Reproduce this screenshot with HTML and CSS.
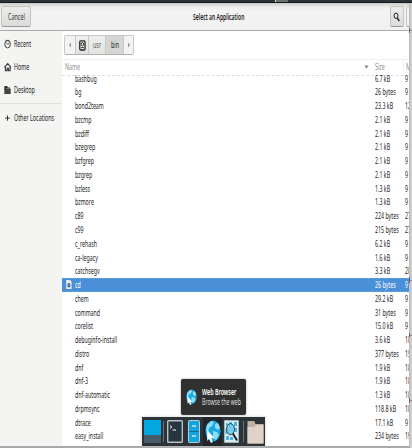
FILE: index.html
```
<!DOCTYPE html>
<html lang="en">
<head>
<meta charset="utf-8">
<title>Select an Application</title>
<link rel="stylesheet" href="styles.css">
</head>
<body>
<div class="desktop">
<div class="panel"><i></i><b></b><em></em></div>
<div class="window">
  <header class="titlebar">
    <button class="btn cancel"><span class="t">Cancel</span></button>
    <h1><span class="t">Select an Application</span></h1>
    <button class="btn search"><svg width="8" height="10" viewBox="0 0 8 10"><ellipse cx="3" cy="3.8" rx="2" ry="2.7" fill="none" stroke="#222" stroke-width="1"/><path d="M4.3 6 6.3 9" stroke="#222" stroke-width="1.4"/></svg></button>
    <button class="btn extra"></button>
  </header>
  <div class="content">
    <nav class="sidebar">
      <a><svg width="8" height="10" viewBox="0 0 8 10"><ellipse cx="3.6" cy="5.3" rx="2.8" ry="3.6" fill="none" stroke="#444" stroke-width="1"/><path d="M2.2 3.8 3.7 5.3 5.4 4.4M1.5 1.4h4" fill="none" stroke="#444" stroke-width=".9"/></svg><span class="t">Recent</span></a>
      <a><svg width="8" height="10" viewBox="0 0 8 10"><path d="M.3 5.4 3.7 1.5 7 5.4M1.4 4.8v4h1.7V6.2h1.3v2.6h1.7v-4" fill="none" stroke="#333" stroke-width="1.1"/></svg><span class="t">Home</span></a>
      <a><svg width="8" height="10" viewBox="0 0 8 10"><path d="M.3 1h2.9l.7 1.4h2.2v1H2v1.1H.3z" fill="#333"/><path d="M.3 3.6h6.4V9H.3z" fill="#444"/></svg><span class="t">Desktop</span></a>
      <a class="other"><svg width="8" height="10" viewBox="0 0 8 10"><path d="M3.5 2.5v5.2M1.2 5.1h4.6" stroke="#333" stroke-width="1"/></svg><span class="t">Other Locations</span></a>
    </nav>
    <main>
      <div class="pathbar">
        <span class="seg arrow"><svg width="4" height="6"><path d="M3 .5v5L.8 3z" fill="#999"/></svg></span>
        <span class="seg disk"><svg width="7" height="11" viewBox="0 0 7 11"><rect x=".8" y=".8" width="5.2" height="9.2" rx="1" fill="#fff" stroke="#222" stroke-width="1.3"/><ellipse cx="3.4" cy="4.2" rx="1.2" ry="1.8" fill="none" stroke="#222"/><path d="M2 7.7h3" stroke="#222"/></svg></span>
        <span class="seg usr"><span class="t">usr</span></span>
        <span class="seg bin"><span class="t">bin</span></span>
        <span class="seg next"><svg width="4" height="6"><path d="M1 .5v5L3.2 3z" fill="#999"/></svg></span>
      </div>
      <div class="head"><span class="name"><span class="t">Name</span></span><svg width="5" height="4"><path d="M.4 .5h4.2L2.5 3.7z" fill="#888"/></svg><span class="size"><span class="t">Size</span></span><span class="mod"><span class="t">M</span></span></div>
      <ul class="list">
        <li><span class="name"><span class="t">bashbug</span></span><span class="size"><span class="t">6.7 kB</span></span><span class="mod"><span class="t">9</span></span></li>
        <li><span class="name"><span class="t">bg</span></span><span class="size"><span class="t">26 bytes</span></span><span class="mod"><span class="t">9</span></span></li>
        <li><span class="name"><span class="t">bond2team</span></span><span class="size"><span class="t">23.3 kB</span></span><span class="mod"><span class="t">12</span></span></li>
        <li><span class="name"><span class="t">bzcmp</span></span><span class="size"><span class="t">2.1 kB</span></span><span class="mod"><span class="t">9</span></span></li>
        <li><span class="name"><span class="t">bzdiff</span></span><span class="size"><span class="t">2.1 kB</span></span><span class="mod"><span class="t">9</span></span></li>
        <li><span class="name"><span class="t">bzegrep</span></span><span class="size"><span class="t">2.1 kB</span></span><span class="mod"><span class="t">9</span></span></li>
        <li><span class="name"><span class="t">bzfgrep</span></span><span class="size"><span class="t">2.1 kB</span></span><span class="mod"><span class="t">9</span></span></li>
        <li><span class="name"><span class="t">bzgrep</span></span><span class="size"><span class="t">2.1 kB</span></span><span class="mod"><span class="t">9</span></span></li>
        <li><span class="name"><span class="t">bzless</span></span><span class="size"><span class="t">1.3 kB</span></span><span class="mod"><span class="t">9</span></span></li>
        <li><span class="name"><span class="t">bzmore</span></span><span class="size"><span class="t">1.3 kB</span></span><span class="mod"><span class="t">9</span></span></li>
        <li><span class="name"><span class="t">c89</span></span><span class="size"><span class="t">224 bytes</span></span><span class="mod"><span class="t">27</span></span></li>
        <li><span class="name"><span class="t">c99</span></span><span class="size"><span class="t">215 bytes</span></span><span class="mod"><span class="t">27</span></span></li>
        <li><span class="name"><span class="t">c_rehash</span></span><span class="size"><span class="t">6.2 kB</span></span><span class="mod"><span class="t">9</span></span></li>
        <li><span class="name"><span class="t">ca-legacy</span></span><span class="size"><span class="t">1.6 kB</span></span><span class="mod"><span class="t">9</span></span></li>
        <li><span class="name"><span class="t">catchsegv</span></span><span class="size"><span class="t">3.3 kB</span></span><span class="mod"><span class="t">28</span></span></li>
        <li class="selected"><svg class="file" width="6" height="9" viewBox="0 0 6 9"><path d="M.2 0h4L5.6 2v7H.2z" fill="#eee9e2"/><ellipse cx="2.9" cy="5.2" rx="1.5" ry="2.2" fill="#315f91"/><circle cx="2.9" cy="5.2" r=".6" fill="#cde"/></svg><span class="name"><span class="t">cd</span></span><span class="size"><span class="t">26 bytes</span></span><span class="mod"><span class="t">9</span></span></li>
        <li><span class="name"><span class="t">chem</span></span><span class="size"><span class="t">29.2 kB</span></span><span class="mod"><span class="t">9</span></span></li>
        <li><span class="name"><span class="t">command</span></span><span class="size"><span class="t">31 bytes</span></span><span class="mod"><span class="t">9</span></span></li>
        <li><span class="name"><span class="t">corelist</span></span><span class="size"><span class="t">15.0 kB</span></span><span class="mod"><span class="t">9</span></span></li>
        <li><span class="name"><span class="t">debuginfo-install</span></span><span class="size"><span class="t">3.6 kB</span></span><span class="mod"><span class="t">18</span></span></li>
        <li><span class="name"><span class="t">distro</span></span><span class="size"><span class="t">377 bytes</span></span><span class="mod"><span class="t">15</span></span></li>
        <li><span class="name"><span class="t">dnf</span></span><span class="size"><span class="t">1.9 kB</span></span><span class="mod"><span class="t">18</span></span></li>
        <li><span class="name"><span class="t">dnf-3</span></span><span class="size"><span class="t">1.9 kB</span></span><span class="mod"><span class="t">18</span></span></li>
        <li><span class="name"><span class="t">dnf-automatic</span></span><span class="size"><span class="t">1.3 kB</span></span><span class="mod"><span class="t">18</span></span></li>
        <li><span class="name"><span class="t">drpmsync</span></span><span class="size"><span class="t">118.8 kB</span></span><span class="mod"><span class="t">18</span></span></li>
        <li><span class="name"><span class="t">dtrace</span></span><span class="size"><span class="t">17.1 kB</span></span><span class="mod"><span class="t">9</span></span></li>
        <li><span class="name"><span class="t">easy_install</span></span><span class="size"><span class="t">234 bytes</span></span><span class="mod"><span class="t">19</span></span></li>
      </ul>
    </main>
  </div>
</div>
<svg class="behind" width="3" height="448"><path d="M.5 28v5M.5 277v6M.5 333v4M.5 398v5" stroke="#56657c"/><path d="M1 30.500h2M1 280.500h2M1 335.500h2M1 400.500h2" stroke="#a08078"/></svg>
<svg width="0" height="0" class="defs"><defs>
  <symbol id="globe" viewBox="0 0 16 24"><ellipse cx="8" cy="11" rx="7.6" ry="10.5" fill="#16a9e2"/><path d="M2 5 6 1l3 1-2 4-3 2-1 5-2-3zM10 4l3-1 2 5-2 2-3-2zM8 11l4 1 2 3-3 5-3-2z" fill="#8fdcf5"/><path d="M2.2 10v11l2.2-2.4L5.8 23l2-1-1.5-4h3z" fill="#fff"/></symbol>
</defs></svg>
<div class="tooltip"><svg width="11" height="17"><use href="#globe"/></svg><div class="tip-text"><strong class="t">Web Browser</strong><span class="t">Browse the web</span></div></div>
<div class="dock">
  <span class="show"></span><i class="sep"></i>
  <svg class="term" width="16" height="23" viewBox="0 0 16 23"><rect x=".7" y=".7" width="14.6" height="21.6" rx=".8" fill="#263640" stroke="#b9c0c4" stroke-width="1.4"/><path d="M3 5.5 4.8 7 3 8.5M5.5 10h3.500" fill="none" stroke="#fff" stroke-width="1"/></svg>
  <svg class="cab" width="12" height="23" viewBox="0 0 12 23"><rect x=".5" y=".5" width="11" height="22" rx=".8" fill="#14a5df" stroke="#b9cdd5"/><path d="M1 11.500h10" stroke="#176c91"/><path d="M4 6h4M4 16h4" stroke="#c6e7f3" stroke-width="1.4"/></svg>
  <span class="active"><svg width="16" height="24"><use href="#globe"/></svg></span>
  <svg class="finder" width="15" height="23" viewBox="0 0 15 23"><rect x=".4" y=".4" width="14.2" height="22.2" rx=".6" fill="#d8edf3" stroke="#aebdc3" stroke-width=".8"/><path d="M2 3h2v3H2zM5 2h3v2H5zM10 2h3v4h-3zM1.500 9h2v5h-2zM2 16h3v4H2zM6 17h3v3H6zM11 8h2v4h-2z" fill="#43b9e1"/><path d="m8.500 13 4.600 7.500" stroke="#222" stroke-width="2"/><ellipse cx="6.5" cy="9.2" rx="4" ry="5.5" fill="#6fcfee" stroke="#33464e" stroke-width="1"/></svg>
  <i class="sep two"></i>
  <svg width="17" height="24" viewBox="0 0 17 24"><path d="M.5 1h6.800l1.200 3h8v19.500H.5z" fill="#c2b1a4"/><path d="M.5 7h6.800l1.500-2h7.700v18.500H.5z" fill="#ded2c9"/></svg>
</div>
</div>
</body>
</html>
```
FILE: styles.css
```
* { box-sizing: border-box; }
body { margin: 0; font-family: "Noto Sans", sans-serif; font-size: 8px; line-height: 12px; color: #1c1c1c; }
svg { display: block; flex: none; }
.defs { position: absolute; }
.behind { position: absolute; left: 409px; top: 0; }
.desktop { position: relative; width: 412px; height: 448px; overflow: hidden; background: linear-gradient(90deg, #a9a9a9 409px, #b5b5b5 409px, #d0d0d0 411px); }
.t { display: inline-block; white-space: nowrap; transform: scaleX(.67); transform-origin: left center; }
.panel { height: 3px; display: flex; background: #2c3336; border-bottom: 1px solid #181b1c; }
.panel i { width: 275px; }
.panel b { width: 1px; background: #ddd; }
.panel em { width: 12px; background: #69706d; }
.window { width: 409px; height: 443px; overflow: hidden; background: #fff; }
.titlebar { height: 28px; display: flex; align-items: flex-start; padding: 3px 0 0 1px; background: linear-gradient(#c9c9c9, #ededed 4px, #f3f3f3 8px, #f1f1f1); border-bottom: 1px solid #aaa; }
.titlebar h1 { margin: 5px 0 0; flex: 1; text-align: center; font-size: 8px; line-height: 12px; font-weight: 600; }
h1 .t, .btn .t, .seg .t { transform-origin: center; }
h1 .t { transform: translateX(8px) scaleX(.63); }
.btn { flex: none; display: flex; align-items: center; justify-content: center; height: 21px; padding: 0; border: 1px solid #c3c3c1; border-bottom-color: #999; border-radius: 2px; background: linear-gradient(#ececeb, #dcdcda); font: inherit; color: #333; }
.cancel { width: 30px; }
.search { width: 14px; margin-right: 2px; }
.extra { width: 14px; margin-right: -11px; background: #f4f4f4; }
.content { display: flex; height: 415px; }
.sidebar { flex: none; width: 62px; background: #f4f4f2; padding-top: 1.5px; }
.sidebar a { display: flex; align-items: center; height: 23px; padding-left: 4px; gap: 2px; }
.sidebar .other { margin-top: 1.5px; height: 29px; border-top: 1px solid #e0e0de; }
main { flex: none; width: 347px; overflow: hidden; }
.pathbar { display: flex; width: 70px; height: 20px; margin: 4px 0 3.5px 2px; border: 1px solid #c9c9c7; border-bottom-color: #b0b0ae; border-radius: 2px; overflow: hidden; background: #eee; }
.seg { display: flex; align-items: center; justify-content: center; flex: none; border-right: 1px solid #c9c9c7; background: linear-gradient(#efefee, #e2e2e0); }
.arrow { width: 11px; background: #f3f3f3; }
.disk { width: 13px; }
.usr { width: 17px; color: #555; }
.bin { width: 18px; background: #d5d5d3; }
.next { width: 9px; border: 0; background: #f3f3f3; }
.head { display: flex; align-items: center; height: 17px; border-top: 1px solid #eee; border-bottom: 1px dashed #ddd; color: #929292; }
.head .name { width: 302px; padding-left: 3px; }
.head .size { padding-left: 6px; width: 34px; }
.head .mod { border-left: 1px solid #eee; padding-left: 2px; }
.name, .size, .mod { flex: none; }
.list { margin: -3.8px 0 0; padding: 0; list-style: none; }
.list li { position: relative; display: flex; align-items: center; height: 13.77px; }
.list .name { width: 313px; padding-left: 13px; }
.list .size { width: 29.6px; }
.list .t { transform: scaleX(.66); }
.selected { background: #4a90d9; color: #fff; border: 1px dotted #69a6e4; border-width: 1px 0; }
.file { position: absolute; left: 4px; top: 1px; }
.tooltip { position: absolute; left: 181px; top: 379px; width: 65px; height: 36px; display: flex; align-items: center; gap: 5px; padding-left: 5px; border-radius: 2px; background: #303030; box-shadow: 0 0 2px #888; color: #ddd; overflow: hidden; }
.tip-text { display: flex; flex-direction: column; line-height: 10px; }
.tip-text strong { color: #fff; font-weight: 600; transform: scaleX(.67); }
.tip-text span { transform: scaleX(.65); }
.dock { position: absolute; left: 142px; top: 417px; width: 123px; height: 29px; display: flex; align-items: center; padding-left: 2px; background: #2d3438; box-shadow: 0 0 3px #ccc; }
.show { width: 17px; height: 23px; background: linear-gradient(#00a8df 65%, #475b68 65%); }
.sep { width: 1px; height: 21px; margin: 0 3px 0 2px; background: #667075; }
.cab { margin-left: 5px; }
.active { display: flex; align-items: center; justify-content: center; width: 19px; height: 29px; margin-left: 3px; background: #202629; }
.finder { margin-left: 2px; }
.two { margin: 0 3px 0 4px; }
```
